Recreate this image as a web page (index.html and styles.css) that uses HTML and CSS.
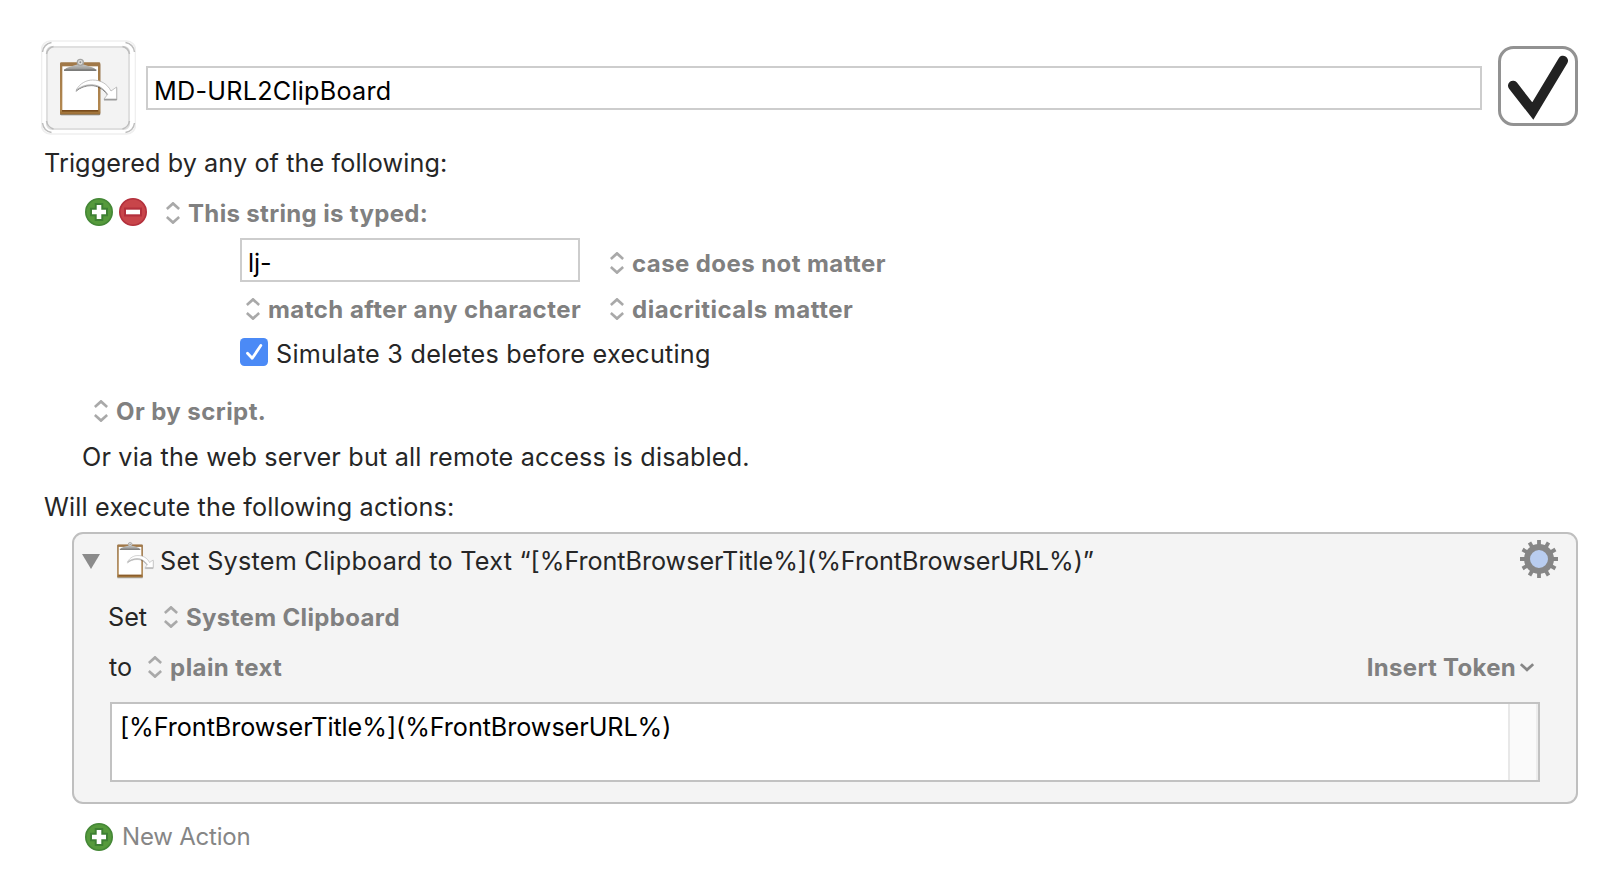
FILE: index.html
```
<!DOCTYPE html>
<html lang="en">
<head>
<meta charset="utf-8">
<title>MD-URL2ClipBoard</title>
<link rel="stylesheet" href="styles.css">
</head>
<body>
<svg class="defs" aria-hidden="true">
  <defs>
    <linearGradient id="metal" x1="0" y1="0" x2="0" y2="1">
      <stop offset="0" stop-color="#c9c9c7"/>
      <stop offset="1" stop-color="#858583"/>
    </linearGradient>
    <linearGradient id="wood" x1="0" y1="0" x2="0" y2="1">
      <stop offset="0" stop-color="#a07848"/>
      <stop offset="0.9" stop-color="#b38850"/>
      <stop offset="1" stop-color="#9a6c32"/>
    </linearGradient>
    <filter id="soft" x="-20%" y="-20%" width="140%" height="150%">
      <feDropShadow dx="0" dy="3" stdDeviation="2" flood-color="#000" flood-opacity="0.55"/>
    </filter>
    <symbol id="clipboard" viewBox="84 80 180 180">
      <g filter="url(#soft)">
        <rect x="90" y="96" width="121" height="156" rx="4" fill="url(#wood)"/>
        <rect x="96" y="239" width="109" height="5" fill="#7a4c1a"/>
      </g>
      <rect x="97" y="108" width="107" height="131" fill="#fff"/>
      <path d="M102 122 Q105 112 120 109 L136 104 Q151 100 166 104 L181 109 Q196 112 199 122 Z" fill="url(#metal)"/>
      <rect x="102" y="117" width="97" height="5" fill="#7b7b79"/>
      <circle cx="151" cy="96" r="9" fill="#dededc" stroke="#a5a5a3" stroke-width="4"/>
      <circle cx="151" cy="96" r="3" fill="#8d8d8b"/>
      <path d="M138 180 C150 158 170 149 188 149 C213 149 232 161 243 182 L260 170 V206 H222 L233 192 C220 172 202 163 184 163 C166 163 150 169 138 180 Z" fill="#fff" stroke="#a6a6a6" stroke-width="2" filter="url(#soft)"/>
    </symbol>
    <symbol id="updown" viewBox="0 0 14 22">
      <path d="M0.8 7 L7 1.4 L13.2 7 M0.8 15 L7 20.6 L13.2 15" fill="none" stroke="#a9a9a9" stroke-width="2.7"/>
    </symbol>
    <symbol id="plus" viewBox="0 0 28 28">
      <circle cx="14" cy="14" r="13.2" fill="#569a3c" stroke="#448736" stroke-width="1.6"/>
      <path d="M14 5 V23 M5 14 H23" stroke="#3e8033" stroke-width="8.5"/>
      <path d="M14 7 V21 M7 14 H21" stroke="#fff" stroke-width="4.6"/>
    </symbol>
    <symbol id="minus" viewBox="0 0 28 28">
      <circle cx="14" cy="14" r="13.2" fill="#c8454a" stroke="#b3303c" stroke-width="1.6"/>
      <rect x="5" y="9.5" width="18" height="9" fill="#b3303c"/>
      <rect x="7" y="11.7" width="14" height="4.6" fill="#fff"/>
    </symbol>
  </defs>
</svg>

<main class="editor">
  <header class="header">
    <svg class="macro-icon" viewBox="0 0 95 95">
      <rect x="0.500" y="1" width="94" height="93" rx="9" fill="#fff" stroke="#efefef" stroke-width="1.600"/>
      <rect x="6" y="7" width="82" height="82" rx="5" fill="#f3f3f3" stroke="#dfdfdf" stroke-width="2"/>
      <g fill="none" stroke="#bdbdbd" stroke-width="1.500">
        <path d="M1.500 12 Q2.500 4 10.500 2.500 M84.500 2.500 Q92.500 4 93.500 12 M93.500 83 Q92.500 91 84.500 92.500 M10.500 92.500 Q2.500 91 1.500 83"/>
        <path d="M5.500 14 Q6.500 8 12.500 6.500 M81.500 6.500 Q87.500 8 88.500 14 M88.500 81 Q87.500 87 81.500 89 M12.500 89 Q6.500 87 5.500 81"/>
      </g>
      <use href="#clipboard" x="17" y="17" width="60" height="60"/>
    </svg>
    <div class="field name-field"><span class="t-name">MD-URL2ClipBoard</span></div>
    <svg class="enabled" viewBox="0 0 80 80">
      <rect x="1.500" y="1.500" width="77" height="77" rx="14" fill="#fff" stroke="#929292" stroke-width="3"/>
      <path d="M15 39.700 L34.800 65 L65 14.700" fill="none" stroke="#222" stroke-width="10" stroke-linecap="round" stroke-linejoin="miter"/>
    </svg>
  </header>

  <div class="row triggered"><span class="t-trig">Triggered by any of the following:</span></div>

  <div class="row string-row">
    <svg class="round"><use href="#plus"/></svg>
    <svg class="round minus"><use href="#minus"/></svg>
    <svg class="updown"><use href="#updown"/></svg>
    <span class="popup t-string">This string is typed:</span>
  </div>

  <div class="options">
    <div class="field string-field"><span class="t-lj">lj-</span></div>
    <div class="row case-row">
      <svg class="updown"><use href="#updown"/></svg>
      <span class="popup t-case">case does not matter</span>
    </div>
    <div class="row match-row">
      <svg class="updown"><use href="#updown"/></svg>
      <span class="popup t-match">match after any character</span>
    </div>
    <div class="row">
      <svg class="updown"><use href="#updown"/></svg>
      <span class="popup t-dia">diacriticals matter</span>
    </div>
  </div>

  <div class="row simulate">
    <svg class="checkbox" viewBox="0 0 28 28">
      <rect width="28" height="28" rx="4.500" fill="#4b8af6"/>
      <path d="M7.500 15.300 L12.200 20.300 L20.800 7.500" fill="none" stroke="#fff" stroke-width="2.800" stroke-linecap="round" stroke-linejoin="round"/>
    </svg>
    <span class="t-sim">Simulate 3 deletes before executing</span>
  </div>

  <div class="row script">
    <svg class="updown"><use href="#updown"/></svg>
    <span class="popup t-script">Or by script.</span>
  </div>
  <div class="row via"><span class="t-via">Or via the web server but all remote access is disabled.</span></div>
  <div class="row will"><span class="t-will">Will execute the following actions:</span></div>

  <section class="action">
    <div class="row action-title">
      <svg class="disclosure" viewBox="0 0 18 15"><path d="M0 0 H18 L9 15 Z" fill="#8b8b8b"/></svg>
      <svg class="action-icon"><use href="#clipboard"/></svg>
      <span class="t-action">Set System Clipboard to Text <span class="t-value">“[%FrontBrowserTitle%](%FrontBrowserURL%)”</span></span>
      <svg class="gear" viewBox="-19 -19 38 38">
        <g stroke="#868686" stroke-width="3.800">
          <path d="M0 -19 V19"/>
          <path d="M0 -19 V19" transform="rotate(30)"/>
          <path d="M0 -19 V19" transform="rotate(60)"/>
          <path d="M0 -19 V19" transform="rotate(90)"/>
          <path d="M0 -19 V19" transform="rotate(120)"/>
          <path d="M0 -19 V19" transform="rotate(150)"/>
        </g>
        <circle r="12" fill="#b9cdf0" stroke="#868686" stroke-width="6"/>
      </svg>
    </div>
    <div class="row set-row">
      <span class="t-set">Set</span>
      <svg class="updown"><use href="#updown"/></svg>
      <span class="popup t-sys">System Clipboard</span>
    </div>
    <div class="row to-row">
      <span>to</span>
      <svg class="updown"><use href="#updown"/></svg>
      <span class="popup t-plain">plain text</span>
      <span class="popup t-token">Insert Token</span>
      <svg class="chevron" viewBox="0 0 14 9"><path d="M0.800 1.200 L7 6.800 L13.200 1.200" fill="none" stroke="#868686" stroke-width="2.800"/></svg>
    </div>
    <div class="textarea">
      <span class="t-area">[%FrontBrowserTitle%](%FrontBrowserURL%)</span>
      <div class="scroller"></div>
    </div>
  </section>

  <div class="row new-action">
    <svg class="round"><use href="#plus"/></svg>
    <span class="t-new">New Action</span>
  </div>
</main>
</body>
</html>
```
FILE: styles.css
```
* { box-sizing: border-box; }
body { margin: 0; background: #fff; }
svg { display: block; flex: none; }
.defs { position: absolute; width: 0; height: 0; }

.editor {
  height: 892px;
  padding: 40px 40px 0 41px;
  overflow: hidden;
  font-family: Inter, "Liberation Sans", sans-serif;
  font-size: 25.2px;
  line-height: 32px;
  color: #262626;
  white-space: nowrap;
}
.row { display: flex; align-items: center; height: 32px; }
.updown { width: 14px; height: 22px; }
.round { width: 28px; height: 28px; }
.popup { padding-top: 2px; font-size: 24px; font-weight: 700; color: #808080; }

.header { display: flex; height: 95px; }
.macro-icon { width: 95px; height: 95px; }
.field { border: 2px solid #cdcdcd; background: #fff; color: #000; height: 44px; }
.name-field { flex: 1; margin: 26px 16px 0 10px; padding: 7px 0 0 6px; }
.enabled { width: 80px; height: 80px; margin-top: 6px; }

.triggered { margin-top: 12px; padding-left: 3px; }
.string-row { margin-top: 18px; padding-left: 44px; }
.string-row .round { margin-top: -2px; }
.string-row .minus { margin-left: 6px; }
.string-row .updown { margin-left: 19px; }
.t-string { margin-left: 8px; }

.options {
  display: grid;
  grid-template-columns: 370px auto;
  row-gap: 11px;
  margin: 9px 0 0 199px;
  justify-content: start;
}
.string-field { width: 340px; padding: 7px 0 0 6px; }
.case-row { margin-top: 9px; }
.match-row { padding-left: 6px; }
.t-case, .t-match, .t-dia { margin-left: 8px; }
.t-script { margin-left: 8px; }

.simulate { margin-top: 13px; padding-left: 199px; }
.checkbox { width: 28px; height: 28px; margin-top: -4px; }
.t-sim { margin-left: 8px; }
.script { margin-top: 25px; padding-left: 53px; }
.via { margin-top: 14px; padding-left: 41px; }
.will { margin-top: 18px; padding-left: 3px; }

.action {
  height: 272px;
  margin: 9px 0 0 31px;
  border: 2px solid #bfbfbf;
  border-radius: 11px;
  background: #f4f4f4;
}
.action-title { margin-top: 11px; padding: 0 18px 0 8px; }
.disclosure { width: 18px; height: 15px; }
.action-icon { width: 38px; height: 38px; margin: -3px 0 0 16px; }
.t-action { margin-left: 6px; }
.gear { width: 38px; height: 38px; margin: -4px 0 0 auto; }
.set-row { margin-top: 24px; padding-left: 34px; }
.t-set { width: 56px; }
.t-sys { margin-left: 8px; }
.to-row { margin-top: 18px; padding: 0 42px 0 35px; }
.to-row .updown { margin-left: 16px; }
.t-plain { margin-left: 8px; }
.t-token { margin-left: auto; }
.chevron { width: 14px; height: 9px; margin-left: 4px; }
.textarea {
  display: flex;
  justify-content: space-between;
  height: 80px;
  margin: 19px 36px 0 36px;
  border: 2px solid #c2c2c2;
  background: #fff;
  color: #000;
}
.t-area { padding: 7px 0 0 8px; }
.scroller {
  width: 30px;
  border-left: 2px solid #e8e8e8;
  border-right: 2px solid #ededed;
  background: #fafafa;
}

.new-action { margin-top: 16px; padding-left: 44px; font-size: 24px; color: #868686; }
.new-action .round { margin-top: 2px; }
.t-new { margin-left: 9px; padding-top: 2px; }

.t-name { letter-spacing: 0.24px; }
.t-trig { letter-spacing: 0.1px; }
.t-string { letter-spacing: 0.34px; }
.t-lj { letter-spacing: -0.1px; }
.t-case { letter-spacing: 0.42px; }
.t-match { letter-spacing: 0.46px; }
.t-dia { letter-spacing: 0.5px; }
.t-sim { letter-spacing: 0.237px; }
.t-script { letter-spacing: 0.43px; }
.t-via { letter-spacing: 0.18px; }
.t-will { letter-spacing: 0.178px; }
.t-action { letter-spacing: 0.25px; }
.t-value { letter-spacing: -0.05px; }
.t-sys { letter-spacing: 0.35px; }
.t-plain { letter-spacing: 0.4px; }
.t-token { letter-spacing: 0.3px; }
.t-area { letter-spacing: -0.07px; }
.t-new { letter-spacing: -0.2px; }
```
